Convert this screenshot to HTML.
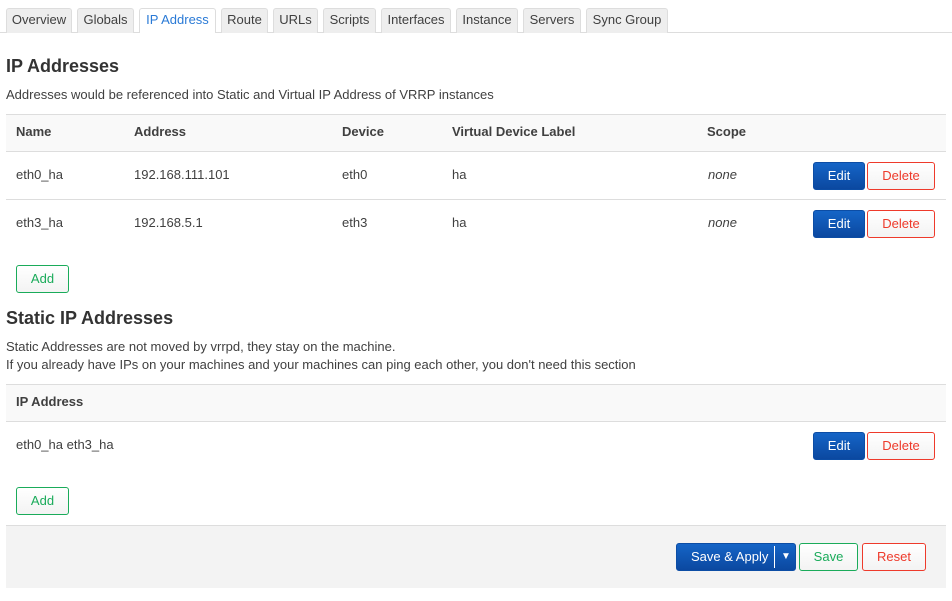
<!DOCTYPE html>
<html><head><meta charset="utf-8"><style>
*{box-sizing:border-box;margin:0;padding:0}
body{width:952px;height:601px;background:#fff;font-family:"Liberation Sans",sans-serif;font-size:13px;color:#404040;position:relative;overflow:hidden}
.a{position:absolute;white-space:nowrap}
.tab{position:absolute;top:8px;height:25px;border:1px solid #ddd;border-bottom:none;border-radius:3px 3px 0 0;background:#eee;color:#404040;font-size:13px;line-height:22px;text-align:center}
.tab.on{background:#fff;color:#2a7ad6;height:25px}
h2{position:absolute;font-size:18px;font-weight:bold;color:#333}
.hdr{position:absolute;left:6px;width:940px;background:#f9f9f9;border-top:1px solid #ddd;border-bottom:1px solid #ddd}
.th{position:absolute;font-weight:bold;color:#404040}
.line{position:absolute;left:6px;width:940px;height:1px;background:#ddd}
.btn{position:absolute;height:28px;border-radius:3px;text-align:center;line-height:26px;font-size:13px}
.edit{background:linear-gradient(#1565c7,#0b48a0);border:1px solid #0c4da5;color:#fff}
.del{background:linear-gradient(#fff,#f3f3f3);border:1px solid #ee3a2b;color:#ee3a2b}
.add{background:linear-gradient(#fff,#f3f3f3);border:1px solid #1aab5a;color:#1aab5a}
</style></head><body>
<div class="a" style="left:0;top:32px;width:952px;height:1px;background:#ddd"></div>
<div class="tab" style="left:6px;width:66px">Overview</div>
<div class="tab" style="left:77px;width:57px">Globals</div>
<div class="tab on" style="left:139px;width:77px">IP Address</div>
<div class="tab" style="left:221px;width:47px">Route</div>
<div class="tab" style="left:273px;width:45px">URLs</div>
<div class="tab" style="left:323px;width:53px">Scripts</div>
<div class="tab" style="left:381px;width:70px">Interfaces</div>
<div class="tab" style="left:456px;width:62px">Instance</div>
<div class="tab" style="left:523px;width:58px">Servers</div>
<div class="tab" style="left:586px;width:82px">Sync Group</div>

<h2 style="left:6px;top:56px">IP Addresses</h2>
<div class="a" style="left:6px;top:87px">Addresses would be referenced into Static and Virtual IP Address of VRRP instances</div>
<div class="hdr" style="top:114px;height:38px"></div>
<div class="th a" style="left:16px;top:124px">Name</div>
<div class="th a" style="left:134px;top:124px">Address</div>
<div class="th a" style="left:342px;top:124px">Device</div>
<div class="th a" style="left:452px;top:124px">Virtual Device Label</div>
<div class="th a" style="left:707px;top:124px">Scope</div>

<div class="a" style="left:16px;top:167px">eth0_ha</div>
<div class="a" style="left:134px;top:167px">192.168.111.101</div>
<div class="a" style="left:342px;top:167px">eth0</div>
<div class="a" style="left:452px;top:167px">ha</div>
<div class="a" style="left:708px;top:167px;font-style:italic">none</div>
<div class="btn edit" style="left:813px;top:162px;width:52px">Edit</div>
<div class="btn del" style="left:867px;top:162px;width:68px">Delete</div>
<div class="line" style="top:199px"></div>
<div class="a" style="left:16px;top:215px">eth3_ha</div>
<div class="a" style="left:134px;top:215px">192.168.5.1</div>
<div class="a" style="left:342px;top:215px">eth3</div>
<div class="a" style="left:452px;top:215px">ha</div>
<div class="a" style="left:708px;top:215px;font-style:italic">none</div>
<div class="btn edit" style="left:813px;top:210px;width:52px">Edit</div>
<div class="btn del" style="left:867px;top:210px;width:68px">Delete</div>
<div class="btn add" style="left:16px;top:265px;width:53px">Add</div>

<h2 style="left:6px;top:308px">Static IP Addresses</h2>
<div class="a" style="left:6px;top:339px">Static Addresses are not moved by vrrpd, they stay on the machine.</div>
<div class="a" style="left:6px;top:357px">If you already have IPs on your machines and your machines can ping each other, you don't need this section</div>
<div class="hdr" style="top:384px;height:38px"></div>
<div class="th a" style="left:16px;top:394px">IP Address</div>
<div class="a" style="left:16px;top:437px">eth0_ha eth3_ha</div>
<div class="btn edit" style="left:813px;top:432px;width:52px">Edit</div>
<div class="btn del" style="left:867px;top:432px;width:68px">Delete</div>
<div class="btn add" style="left:16px;top:487px;width:53px">Add</div>

<div class="a" style="left:6px;top:525px;width:940px;height:63px;background:#f3f3f3;border-top:1px solid #ddd"></div>
<div class="btn edit" style="left:676px;top:543px;width:120px;text-align:left;padding-left:14px">Save &amp; Apply<span style="position:absolute;left:97px;top:2px;width:1px;height:22px;background:#fff"></span><span style="position:absolute;left:104px;top:0;font-size:10px">▼</span></div>
<div class="btn add" style="left:799px;top:543px;width:59px">Save</div>
<div class="btn del" style="left:862px;top:543px;width:64px">Reset</div>
</body></html>
